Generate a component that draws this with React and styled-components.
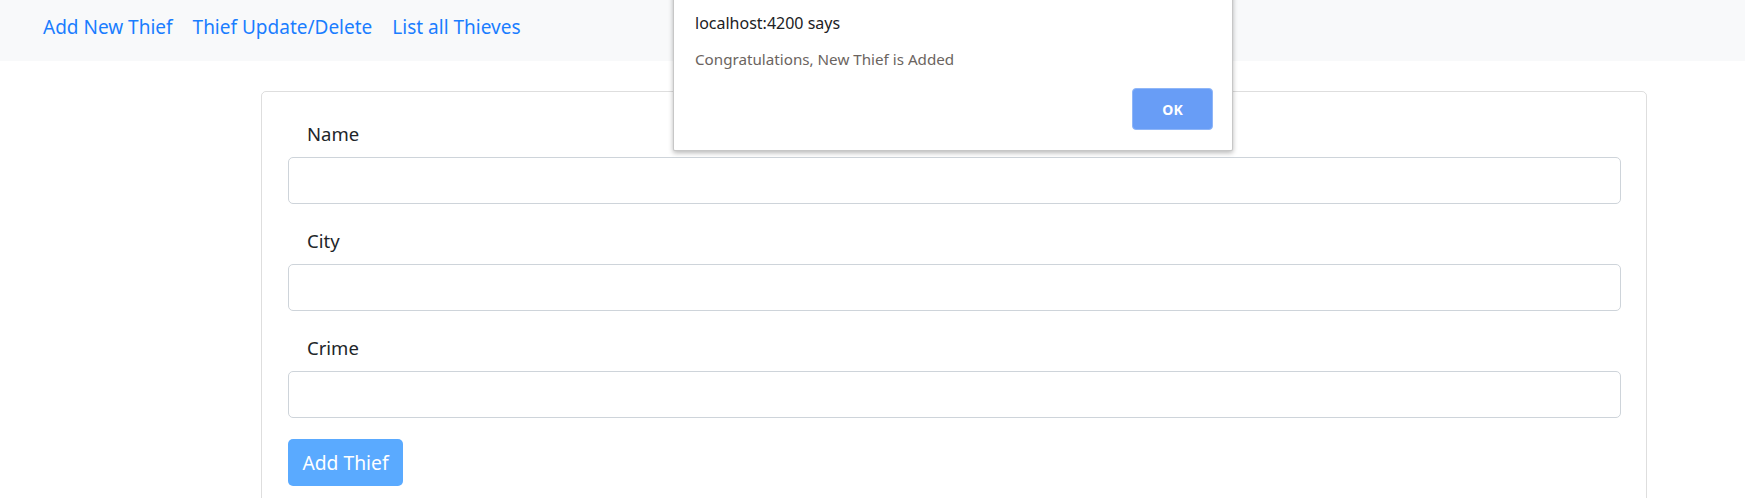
import React from 'react';
import styled, { createGlobalStyle } from 'styled-components';

const GlobalStyle = createGlobalStyle`
    html, body {
        margin: 0;
        padding: 0;
        background: #fff;
        font-family: "Noto Sans", "Open Sans", sans-serif;
        color: #212529;
    }
`

const Page = styled.div`
    position: relative;
    width: 1745px;
    height: 498px;
    overflow: hidden;
`

const NavBar = styled.nav`
    display: flex;
    align-items: flex-start;
    box-sizing: border-box;
    height: 61px;
    padding: 14px 0 0 33px;
    background-color: #f8f9fa;
`

const NavLink = styled.a`
    padding: 0 10px;
    font-size: 19px;
    line-height: 26px;
    color: #1a7dff;
    text-decoration: none;
    cursor: pointer;
`

const Card = styled.section`
    margin: 30px 0 0 261px;
    width: 1386px;
    height: 500px;
    box-sizing: border-box;
    padding: 28px 25px 0 26px;
    border: 1px solid rgba(0, 0, 0, 0.13);
    border-radius: 5px;
`

const FormGroup = styled.div`
    display: flex;
    flex-direction: column;
    margin-bottom: ${(props) => (props.last ? '21px' : '23px')};
`

const Label = styled.label`
    padding-left: 19px;
    margin-bottom: 10px;
    font-size: 18.5px;
    line-height: 27px;
    color: #212529;
`

const Input = styled.input`
    height: 47px;
    box-sizing: border-box;
    border: 1px solid #ced4da;
    border-radius: 5px;
    padding: 0 13px;
    font: inherit;
    font-size: 18px;
    outline: none;
`

const SubmitButton = styled.button`
    width: 115px;
    height: 47px;
    padding: 0;
    border: none;
    border-radius: 5px;
    background-color: #5aaaff;
    color: #fff;
    font-family: inherit;
    font-size: 19.3px;
    cursor: pointer;
`

const Dialog = styled.div`
    position: absolute;
    left: 673px;
    top: -10px;
    width: 560px;
    box-sizing: border-box;
    padding: 22px 19px 20px 21px;
    display: flex;
    flex-direction: column;
    background: #fff;
    border: 1px solid rgba(0, 0, 0, 0.22);
    border-top: none;
    border-radius: 2px;
    box-shadow: 0 2px 5px rgba(0, 0, 0, 0.28);
`

const DialogTitle = styled.div`
    font-size: 16px;
    line-height: 22px;
    color: #202124;
`

const DialogMessage = styled.div`
    margin-top: 15px;
    font-size: 15.2px;
    line-height: 20px;
    color: #6b6460;
`

const DialogActions = styled.div`
    display: flex;
    justify-content: flex-end;
    margin-top: 19px;
`

const OkButton = styled.button`
    width: 81px;
    height: 42px;
    border: 1px solid #8fb6f8;
    border-radius: 4px;
    background-color: #689df6;
    color: #fff;
    font-family: inherit;
    font-weight: 700;
    font-size: 14px;
    cursor: pointer;
`

const fields = ['Name', 'City', 'Crime'];

export default function App() {
    return (
        <Page>
            <GlobalStyle />
            <NavBar>
                <NavLink>Add New Thief</NavLink>
                <NavLink>Thief Update/Delete</NavLink>
                <NavLink>List all Thieves</NavLink>
            </NavBar>

            <Card>
                {fields.map((field, i) => (
                    <FormGroup key={field} last={i === fields.length - 1}>
                        <Label>{field}</Label>
                        <Input type="text" />
                    </FormGroup>
                ))}
                <SubmitButton>Add Thief</SubmitButton>
            </Card>

            <Dialog>
                <DialogTitle>localhost:4200 says</DialogTitle>
                <DialogMessage>Congratulations, New Thief is Added</DialogMessage>
                <DialogActions>
                    <OkButton>OK</OkButton>
                </DialogActions>
            </Dialog>
        </Page>
    )
}
